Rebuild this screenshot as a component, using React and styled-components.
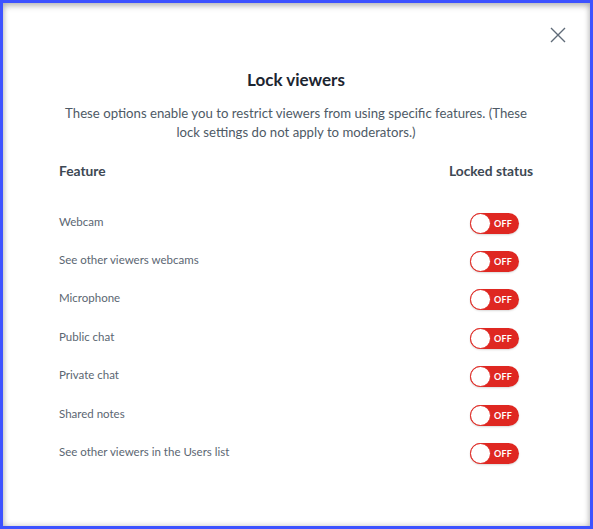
import React from "react";
import styled, { createGlobalStyle } from "styled-components";

const Global = createGlobalStyle`
  html, body { margin: 0; padding: 0; background: #fff; }
  body { font-family: "Lato", "Open Sans", sans-serif; }
  * { box-sizing: border-box; }
`;

const Frame = styled.div`
  width: 593px;
  height: 529px;
  border: 3px solid #3d52ff;
  box-shadow: inset 0 3px 6px rgba(0, 0, 0, 0.22), inset 0 0 6px rgba(0, 0, 0, 0.18);
  background: #fff;
  position: relative;
  display: flex;
  flex-direction: column;
  padding: 0 57px 0 56px;
`;

const CloseButton = styled.button`
  position: absolute;
  top: 20px;
  right: 20px;
  width: 24px;
  height: 24px;
  padding: 0;
  border: none;
  background: none;
  display: flex;
  align-items: center;
  justify-content: center;
  cursor: pointer;
`;

const Title = styled.h2`
  margin: 66px 0 0;
  text-align: center;
  font-size: 17px;
  font-weight: 700;
  color: #1c2530;
  line-height: 22px;
`;

const Description = styled.p`
  margin: 13px 0 0;
  text-align: center;
  font-size: 13.2px;
  line-height: 19px;
  color: #4e5a66;
`;

const Row = styled.div`
  display: grid;
  grid-template-columns: 1fr 85px;
  align-items: center;
  height: ${(p) => p.h}px;
`;

const HeaderCell = styled.div`
  font-size: 13.8px;
  font-weight: 700;
  color: #3d4853;
  white-space: nowrap;
  text-align: ${(p) => (p.right ? "right" : "left")};
`;

const Header = styled(Row)`
  margin-top: 19px;
`;

const List = styled.div`
  margin-top: 25px;
  display: flex;
  flex-direction: column;
`;

const FeatureName = styled.div`
  font-size: 11.5px;
  color: #5b6672;
  padding-bottom: 4px;
`;

const ToggleCell = styled.div`
  display: flex;
  justify-content: flex-end;
  padding-right: 14px;
`;

const Toggle = styled.div`
  width: 49px;
  height: 21px;
  border-radius: 11px;
  background: #df2721;
  position: relative;
  display: flex;
  align-items: center;
  justify-content: flex-end;
  padding-right: 7px;
  box-shadow: 0 1px 2px rgba(0, 0, 0, 0.15);
`;

const Knob = styled.span`
  position: absolute;
  left: 0;
  top: 0;
  width: 21px;
  height: 21px;
  border-radius: 50%;
  background: #fff;
  border: 1.5px solid #df2721;
`;

const ToggleLabel = styled.span`
  font-size: 9px;
  font-weight: 700;
  color: #fff;
  letter-spacing: 0.2px;
`;

const features = [
  "Webcam",
  "See other viewers webcams",
  "Microphone",
  "Public chat",
  "Private chat",
  "Shared notes",
  "See other viewers in the Users list",
];

export default function App() {
  return (
    <>
      <Global />
      <Frame>
        <CloseButton aria-label="Close">
          <svg width="16" height="16" viewBox="0 0 16 16">
            <path d="M1 1 L15 15 M15 1 L1 15" stroke="#5f6b78" strokeWidth="1.4" fill="none" />
          </svg>
        </CloseButton>
        <Title>Lock viewers</Title>
        <Description>
          These options enable you to restrict viewers from using specific features. (These
          lock settings do not apply to moderators.)
        </Description>
        <Header h={18}>
          <HeaderCell>Feature</HeaderCell>
          <HeaderCell right>Locked status</HeaderCell>
        </Header>
        <List>
          {features.map((f) => (
            <Row key={f} h={38.4}>
              <FeatureName>{f}</FeatureName>
              <ToggleCell>
                <Toggle>
                  <Knob />
                  <ToggleLabel>OFF</ToggleLabel>
                </Toggle>
              </ToggleCell>
            </Row>
          ))}
        </List>
      </Frame>
    </>
  );
}
